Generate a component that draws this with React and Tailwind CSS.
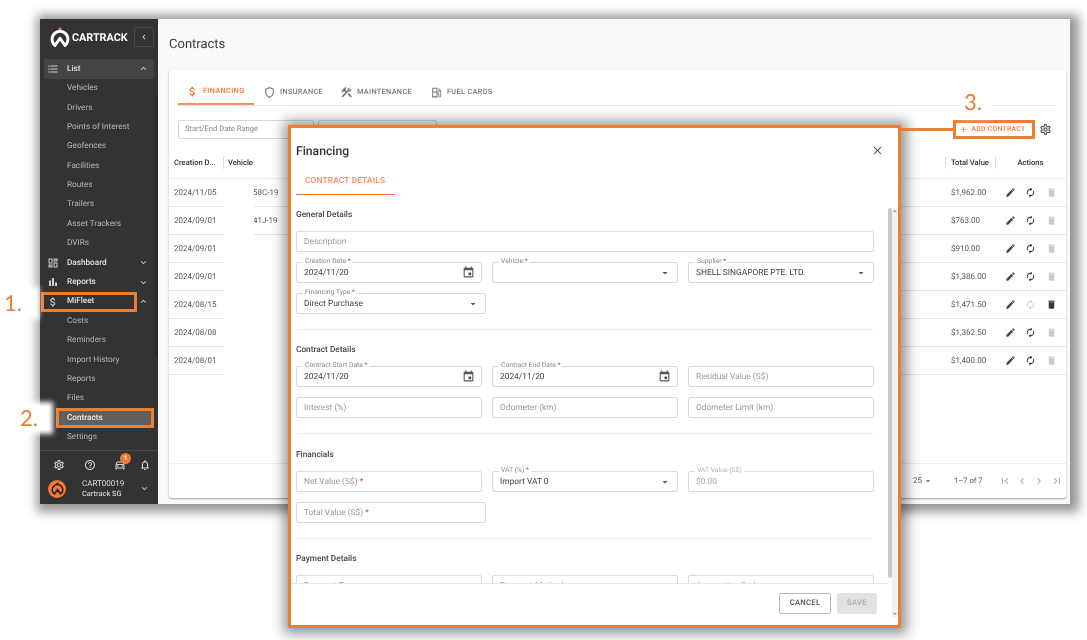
import React from "react";
import {
  MdFormatListBulleted, MdExpandLess, MdExpandMore, MdOutlineDashboard, MdBarChart, MdAttachMoney,
  MdOutlineSettings, MdHelpOutline, MdOutlineDirectionsCar, MdOutlineNotifications, MdChevronLeft,
  MdChevronRight, MdFirstPage, MdLastPage, MdOutlineShield, MdConstruction, MdOutlineLocalGasStation,
  MdEdit, MdAutorenew, MdDelete, MdEvent, MdArrowDropDown, MdClose, MdAdd,
} from "react-icons/md";

function Logo({ size = 20 }) {
  return (
    <svg width={size} height={size} viewBox="0 0 24 24" fill="none">
      <circle cx="12" cy="2.2" r="1.9" fill="#f47735" />
      <path d="M4.4 20.5A9.6 9.6 0 1 1 19.6 20.5" stroke="#fff" strokeWidth="3.6" strokeLinecap="round" />
      <path d="M6 22.2L12 13.5l6 8.7" stroke="#fff" strokeWidth="3.6" strokeLinejoin="round" strokeLinecap="round" />
    </svg>
  );
}

function NavTop({ icon: Icon, label, open, active }) {
  return (
    <div className={`h-[19.4px] mx-[4px] pl-[3px] pr-[5px] flex items-center rounded-[2px] ${active ? "bg-[#444444]" : ""}`}>
      <Icon size={12} className="text-[#d0d0d0] w-[12px] shrink-0" />
      <span className="ml-[8px] flex-1 text-[8.2px] font-medium text-[#e0e0e0]">{label}</span>
      {open ? <MdExpandLess size={11} className="text-[#d0d0d0]" /> : <MdExpandMore size={11} className="text-[#d0d0d0]" />}
    </div>
  );
}

function NavSub({ label }) {
  return <div className="h-[19.4px] pl-[27px] flex items-center text-[8.2px] text-[#b8b8b8]">{label}</div>;
}

function Sidebar() {
  return (
    <aside className="relative w-[118px] shrink-0 bg-[#333333] flex flex-col">
      <div className="h-[40.2px] flex items-start pt-[8px] pl-[10px]">
        <Logo />
        <span className="ml-[2px] mt-[5px] text-[10.8px] leading-[12px] font-bold text-white">CARTRACK</span>
        <div className="ml-[6px] w-[20px] h-[20px] rounded-[2px] border border-[#4a4a4a] flex items-center justify-center">
          <MdChevronLeft size={10} className="text-[#ddd]" />
        </div>
      </div>
      <NavTop icon={MdFormatListBulleted} label="List" open active />
      {["Vehicles", "Drivers", "Points of Interest", "Geofences", "Facilities", "Routes", "Trailers", "Asset Trackers", "DVIRs"].map((l) => (
        <NavSub key={l} label={l} />
      ))}
      <NavTop icon={MdOutlineDashboard} label="Dashboard" />
      <NavTop icon={MdBarChart} label="Reports" />
      <div className="relative">
        <NavTop icon={MdAttachMoney} label="MiFleet" open />
        <div className="absolute left-[1px] top-0 w-[96px] h-[20px] border-[3px] border-[#ed7d31]" />
      </div>
      {["Costs", "Reminders", "Import History", "Reports", "Files"].map((l, i) => (
        <NavSub key={l + i} label={l} />
      ))}
      <div className="h-[20px] ml-[16px] mr-[4px] border-[3px] border-[#ed7d31] bg-[#5f5f5f] pl-[8px] flex items-center text-[8.2px] font-medium text-[#eeeeee]">
        Contracts
      </div>
      <div className="-mt-[0.6px]"><NavSub label="Settings" /></div>
      <div className="mt-auto h-[54px] border-t border-[#4a4a4a]">
        <div className="flex items-center h-[27px] pl-[13px] text-[#d5d5d5]">
          <MdOutlineSettings size={12} />
          <MdHelpOutline size={12} className="ml-[19px]" />
          <div className="relative ml-[18px]">
            <MdOutlineDirectionsCar size={12} />
            <span className="absolute -top-[6px] left-[6px] w-[11px] h-[11px] rounded-full bg-[#f47735] text-white text-[6.5px] leading-[11px] text-center font-bold">1</span>
          </div>
          <MdOutlineNotifications size={12} className="ml-[13px]" />
        </div>
        <div className="flex items-center pl-[8px] pr-[8px]">
          <div className="w-[18px] h-[18px] rounded-full bg-[#f47735] flex items-center justify-center">
            <svg width="13" height="13" viewBox="0 0 24 24" fill="none">
              <circle cx="12" cy="3" r="2" fill="#222" />
              <path d="M4.6 20.5A9.6 9.6 0 1 1 19.4 20.5" stroke="#222" strokeWidth="3" strokeLinecap="round" />
              <path d="M6.5 22L12 14l5.5 8" stroke="#222" strokeWidth="3" strokeLinecap="round" />
            </svg>
          </div>
          <div className="ml-[16px] flex-1 pt-px">
            <div className="text-[8px] leading-[10px] text-[#dddddd]">CART00019</div>
            <div className="text-[7.4px] leading-[10px] font-medium text-[#cccccc]">Cartrack SG</div>
          </div>
          <MdExpandMore size={11} className="text-[#d0d0d0]" />
        </div>
      </div>
      <div className="absolute right-0 top-[77px] w-[3px] h-[262px] bg-[#2b2b2b]" />
    </aside>
  );
}

function Tab({ icon: Icon, label, active, className }) {
  return (
    <div className={`h-[25px] flex items-center ${active ? "border-b-2 border-[#f68d5a] text-[#f47735]" : "text-[#777777]"} ${className}`}>
      <Icon size={13} className="shrink-0" />
      <span className="ml-[4px] text-[7.3px] font-medium tracking-[0.35px] uppercase">{label}</span>
    </div>
  );
}

const rows = [
  ["2024/11/05", "58C-19", "$1,962.00"],
  ["2024/09/01", "41J-19", "$763.00"],
  ["2024/09/01", "", "$910.00"],
  ["2024/09/01", "", "$1,386.00"],
  ["2024/08/15", "", "$1,471.50", true],
  ["2024/08/08", "", "$1,362.50"],
  ["2024/08/01", "", "$1,400.00"],
];

function TableRow({ date, veh, amount, alt }) {
  return (
    <div className="flex h-[28px] text-[8px] text-[#555555]">
      <div className="w-[55px] pl-[5px] flex items-center border-b border-[#e6e6e6]">{date}</div>
      <div className="w-[30px]" />
      <div className={`w-[647px] flex items-center overflow-hidden ${veh ? "border-b border-[#e6e6e6]" : ""}`}>
        <span className="-ml-[1px]">{veh}</span>
      </div>
      <div className="flex-1 flex items-center pl-[50px] border-b border-[#e6e6e6]">
        <span className="w-[54px]">{amount}</span>
        <MdEdit size={11} className="text-[#444]" />
        <MdAutorenew size={11} className={`ml-[9px] ${alt ? "text-[#cccccc]" : "text-[#333]"}`} />
        <MdDelete size={11} className={`ml-[10px] ${alt ? "text-[#333]" : "text-[#cccccc]"}`} />
      </div>
    </div>
  );
}

function Card() {
  return (
    <div className="flex-1 bg-white rounded-[2px] shadow-[0_1px_2px_rgba(0,0,0,0.35)] flex flex-col">
      <div className="mx-[9px] mt-[10px] flex border-b border-[#e8e8e8]">
        <Tab icon={MdAttachMoney} label="Financing" active className="w-[76px] pl-[8px]" />
        <Tab icon={MdOutlineShield} label="Insurance" className="ml-[9px] w-[77px]" />
        <Tab icon={MdConstruction} label="Maintenance" className="w-[90px]" />
        <Tab icon={MdOutlineLocalGasStation} label="Fuel Cards" />
      </div>
      <div className="mx-[9px] mt-[13px] pr-[4px] flex items-center h-[20px]">
        <div className="w-[136px] h-[19px] border border-[#d8d8d8] rounded-[2px] pl-[6px] flex items-center text-[7.6px] text-[#888888]">Start/End Date Range</div>
        <div className="ml-[4px] w-[119px] h-[19px] border border-[#d8d8d8] rounded-[2px] flex items-start justify-end pr-[6px]">
          <MdArrowDropDown size={12} className="text-[#666] -mt-[1px]" />
        </div>
        <div className="ml-auto w-[82px] h-[19px] border-[3px] border-[#ed7d31] flex items-center justify-center text-[#f47735]">
          <MdAdd size={9} className="-ml-[3px]" />
          <span className="ml-[4px] text-[6.8px] font-medium tracking-[0.3px]">ADD CONTRACT</span>
        </div>
        <MdOutlineSettings size={13} className="ml-[4px] mr-[1px] text-[#555]" />
      </div>
      <div className="mt-[12px] h-[28px] pb-[3px] flex text-[7.6px] font-medium text-[#333333] border-b border-[#ececec]">
        <div className="w-[55px] pl-[5px] flex items-center"><span className="flex-1">Creation D...</span><span className="w-px h-[12px] bg-[#dddddd]" /></div>
        <div className="pl-[4px] flex items-center w-[677px]">Vehicle</div>
        <div className="flex-1 flex items-center pl-[44px]">
          <span className="w-px h-[12px] bg-[#dddddd]" />
          <span className="w-[49px] pl-[5px]">Total Value</span>
          <span className="w-px h-[12px] bg-[#dddddd]" />
          <span className="w-[69px] text-center">Actions</span>
        </div>
      </div>
      {rows.map((r, i) => <TableRow key={i} date={r[0]} veh={r[1]} amount={r[2]} alt={r[3]} />)}
      <div className="mt-auto h-[35px] border-t border-[#eeeeee] flex items-center pl-[744px] text-[8px] text-[#555555]">
        <span>25</span>
        <MdArrowDropDown size={10} className="ml-[1px]" />
        <span className="ml-[21px] w-[45px] text-[7.6px]">1–7 of 7</span>
        <MdFirstPage size={12} className="text-[#aaaaaa]" />
        <MdChevronLeft size={12} className="ml-[5px] text-[#aaaaaa]" />
        <MdChevronRight size={12} className="ml-[5px] text-[#aaaaaa]" />
        <MdLastPage size={12} className="ml-[6px] text-[#aaaaaa]" />
      </div>
    </div>
  );
}

function Field({ label, value, placeholder, req, icon: Icon, disabled, className = "" }) {
  return (
    <div className={`relative h-[21px] border border-[#d9d9d9] rounded-[2px] flex items-center pl-[7px] pr-[6px] text-[8.4px] ${className}`}>
      {label && (
        <span className={`absolute -top-[6px] left-[6px] px-[2px] bg-white text-[6.8px] leading-[8px] ${disabled ? "text-[#b5b5b5]" : "text-[#888888]"}`}>
          {label}{req && <span className="text-[#e53935]"> *</span>}
        </span>
      )}
      <span className={`flex-1 pt-[1px] ${value ? (disabled ? "text-[#aaaaaa]" : "text-[#444444]") : "text-[#999999]"}`}>
        {value || placeholder}
        {placeholder && req && <span className="text-[#e53935]"> *</span>}
      </span>
      {Icon && <Icon size={Icon === MdEvent ? 13 : 12} className="text-[#555555] shrink-0" />}
    </div>
  );
}

function Section({ title, children, className = "" }) {
  return (
    <div className={className}>
      <div className="h-[12px] pt-[1px] leading-[12px] text-[8.3px] font-medium text-[#444444]">{title}</div>
      <div className="mt-[11px] flex flex-col gap-[10px]">{children}</div>
    </div>
  );
}

function Modal() {
  return (
    <div className="absolute left-[288px] top-[125px] w-[613px] h-[503px] border-[3px] border-[#ed7d31] bg-white shadow-[1px_1px_12px_5px_rgba(0,0,0,0.42)] flex flex-col">
      <div className="h-[80px] shrink-0 pl-[5px] pr-[14px]">
        <div className="flex items-center justify-between pt-[14px]">
          <span className="pt-[1px] text-[12.2px] leading-[16px] font-medium text-[#333333]">Financing</span>
          <MdClose size={13} className="text-[#555555]" />
        </div>
        <div className="mt-[11px] w-[99px] h-[25px] pb-[2px] border-b border-[#f47735] pl-[9px] flex items-center text-[8.3px] font-medium tracking-[0.2px] text-[#f68d5a]">
          CONTRACT DETAILS
        </div>
      </div>
      <div className="flex-1 flex min-h-0">
        <div className="w-[597px] flex flex-col min-h-0">
          <div className="flex-1 min-h-0 overflow-hidden pl-[5px] pr-[14px]">
            <Section title="General Details">
              <Field placeholder="Description" />
              <div className="grid grid-cols-3 gap-[10px]">
                <Field label="Creation Date" req value="2024/11/20" icon={MdEvent} />
                <Field label="Vehicle" req icon={MdArrowDropDown} />
                <Field label="Supplier" req value="SHELL SINGAPORE PTE. LTD." icon={MdArrowDropDown} />
              </div>
              <Field label="Financing Type" req value="Direct Purchase" icon={MdArrowDropDown} className="w-[190px]" />
            </Section>
            <Section title="Contract Details" className="border-t border-[#eeeeee] mt-[15px] pt-[13px]">
              <div className="grid grid-cols-3 gap-[10px]">
                <Field label="Contract Start Date" req value="2024/11/20" icon={MdEvent} />
                <Field label="Contract End Date" req value="2024/11/20" icon={MdEvent} />
                <Field placeholder="Residual Value (S$)" />
              </div>
              <div className="grid grid-cols-3 gap-[10px]">
                <Field placeholder="Interest (%)" />
                <Field placeholder="Odometer (km)" />
                <Field placeholder="Odometer Limit (km)" />
              </div>
            </Section>
            <Section title="Financials" className="border-t border-[#eeeeee] mt-[15px] pt-[14px]">
              <div className="grid grid-cols-3 gap-[10px]">
                <Field placeholder="Net Value (S$)" req />
                <Field label="VAT (%)" req value="Import VAT 0" icon={MdArrowDropDown} />
                <Field label="VAT Value (S$)" value="$0.00" disabled />
              </div>
              <Field placeholder="Total Value (S$)" req className="w-[190px]" />
            </Section>
            <Section title="Payment Details" className="border-t border-[#eeeeee] mt-[15px] pt-[13px]">
              <div className="grid grid-cols-3 gap-[10px]">
                <Field placeholder="Payment Type" />
                <Field placeholder="Payment Method" />
                <Field placeholder="Accounting Code" />
              </div>
            </Section>
          </div>
          <div className="h-[42px] shrink-0 border-t border-[#e8e8e8] flex items-center justify-end gap-[6px] pr-[11px] pb-[3px] bg-white">
            <div className="w-[52px] h-[21px] border border-[#bbbbbb] rounded-[2px] flex items-center justify-center text-[7.8px] font-medium tracking-[0.2px] text-[#555555]">CANCEL</div>
            <div className="w-[40px] h-[21px] bg-[#e2e2e2] rounded-[2px] flex items-center justify-center text-[7.8px] font-medium tracking-[0.2px] text-[#aaaaaa]">SAVE</div>
          </div>
        </div>
        <div className="w-[10px] flex shrink-0">
          <div className="w-[4px] h-[370px] bg-[#c9c9c9] rounded-[2px]" />
          <div className="w-[5px] mb-[8px] bg-[#f1f1f1] flex flex-col items-center justify-between py-[2px]">
            <span className="w-0 h-0 border-x-[2px] border-x-transparent border-b-[2px] border-b-[#999999]" />
            <span className="w-0 h-0 border-x-[2px] border-x-transparent border-t-[2px] border-t-[#999999]" />
          </div>
        </div>
      </div>
    </div>
  );
}

function Note({ text, className }) {
  return (
    <div className={`absolute bg-white shadow-[0_0_5px_4px_#ffffff] text-[22px] leading-[24px] text-[#ed7d31] font-['Lato',sans-serif] ${className}`}>
      {text}
    </div>
  );
}

export default function App() {
  return (
    <div className="relative w-[1087px] h-[640px] overflow-hidden bg-white pt-[19px] pl-[40px] font-['Roboto',sans-serif] [text-rendering:geometricPrecision] blur-[0.35px]">
      <div className="w-[1029.5px] h-[485px] flex shadow-[3px_2px_10px_6px_rgba(0,0,0,0.42)]">
        <Sidebar />
        <main className="flex-1 bg-[#f9f9f9] flex flex-col pl-[11px] pr-[4px] pb-[6px]">
          <div className="h-[51px] shrink-0 flex items-center pt-[1px] text-[13px] text-[#3a3a3a]">Contracts</div>
          <Card />
        </main>
      </div>
      <Modal />
      <div className="absolute left-[901px] top-[128px] w-[54px] h-[3px] bg-[#ed7d31]" />
      <Note text="1." className="left-[3px] top-[291px] w-[32px] pl-px" />
      <Note text="2." className="left-[19px] top-[406px] w-[30px] pl-px" />
      <Note text="3." className="left-[964px] top-[90px] w-[24px]" />
    </div>
  );
}
